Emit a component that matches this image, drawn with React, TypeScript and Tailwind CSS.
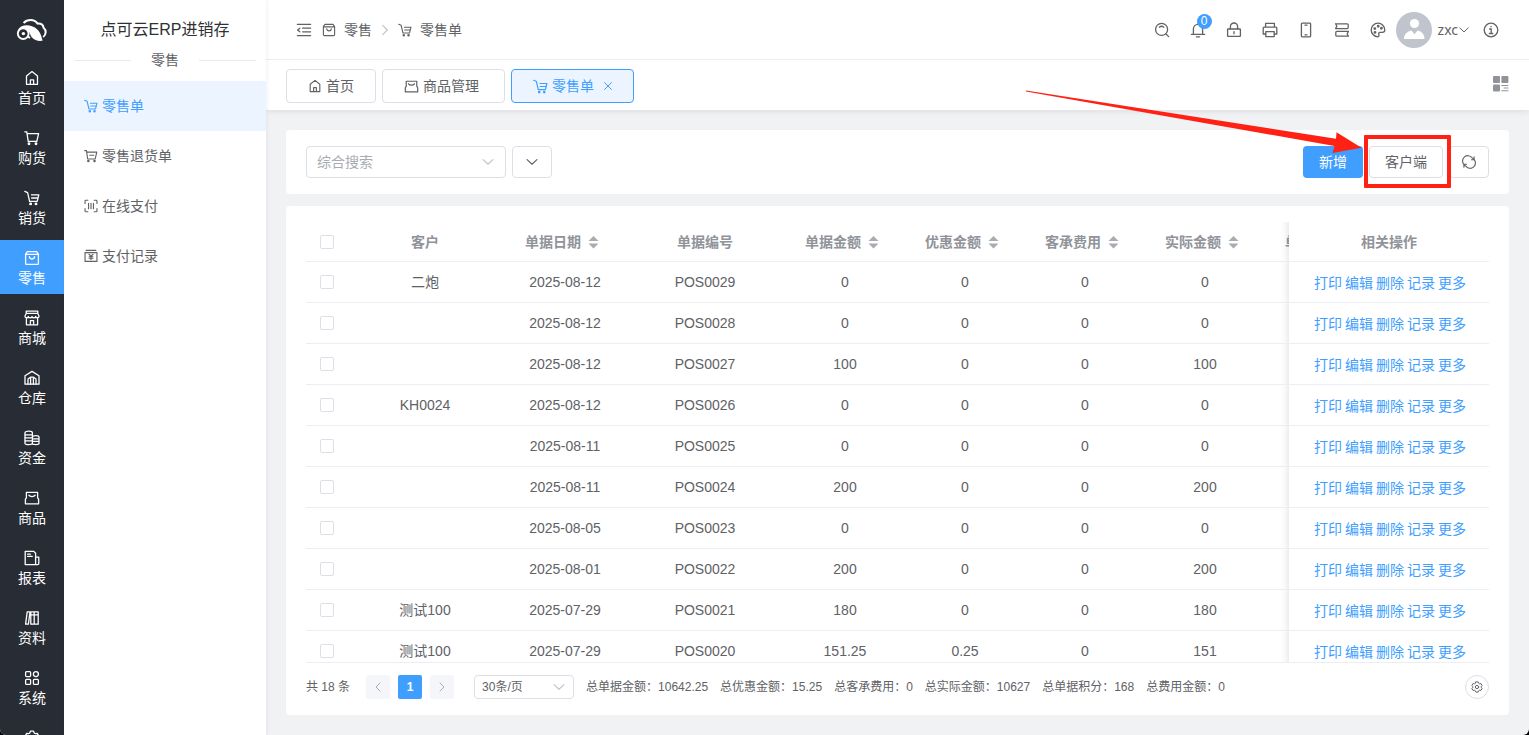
import type { ReactNode } from "react";

type IconProps = { className?: string };

function Svg({ className = "size-4", children }: { className?: string; children: ReactNode }) {
    return (
        <svg
            viewBox="0 0 16 16"
            className={`shrink-0 ${className}`}
            fill="none"
            stroke="currentColor"
            strokeWidth="1.3"
            strokeLinecap="round"
            strokeLinejoin="round"
            aria-hidden="true"
        >
            {children}
        </svg>
    );
}

const HomeIcon = ({ className }: IconProps) => (
    <Svg className={className}>
        <path d="M2.5 14.4V6L8 1.6 13.5 6v8.4z" />
        <path d="M6.4 14.2V9.8h3.2v4.400" />
    </Svg>
);

const CartIcon = ({ className }: IconProps) => (
    <Svg className={className}>
        <path d="M.8 1.8h2l1.400 9.600h8.600L14.6 3.6H3.2" />
        <circle cx="5" cy="13.8" r=".8" fill="currentColor" />
        <circle cx="12" cy="13.8" r=".8" fill="currentColor" />
    </Svg>
);

const CartReturnIcon = ({ className }: IconProps) => (
    <Svg className={className}>
        <path d="M.8 1.8h2l1.400 9.600h8.600L14.6 3.600H3.200M6.600 7.200h4.600" />
        <circle cx="5" cy="13.8" r=".8" fill="currentColor" />
        <circle cx="12" cy="13.8" r=".8" fill="currentColor" />
    </Svg>
);

const SaleCartIcon = ({ className }: IconProps) => (
    <Svg className={className}>
        <path d="M.8 1.400 3.600 2.600l2 8.800h7.600L14.800 4.800H7.400M7.600 8h6.200" />
        <circle cx="6.6" cy="13.900" r=".8" fill="currentColor" />
        <circle cx="12" cy="13.900" r=".8" fill="currentColor" />
    </Svg>
);

const BagIcon = ({ className }: IconProps) => (
    <Svg className={className}>
        <path d="M1.600 4.400h12.800v9a1 1 0 0 1-1 1H2.600a1 1 0 0 1-1-1zM1.600 4.200l1.800-2.600h9.200l1.800 2.600" />
        <path d="M5.400 6.600a2.600 2.400 0 0 0 5.200 0" />
    </Svg>
);

const ShopIcon = ({ className }: IconProps) => (
    <Svg className={className}>
        <path d="M2.200 1.200h11.600v2.200H2.200zM2.200 3.400.9 6.200c0 2 3.400 2 3.500.2 0 1.800 3.600 1.800 3.600 0 0 1.800 3.600 1.800 3.600 0 .1 1.800 3.500 1.800 3.500-.2l-1.300-2.800" />
        <path d="M2.400 8v6.800h11.200V8M6.400 14.600v-4h3.200v4" />
    </Svg>
);

const WarehouseIcon = ({ className }: IconProps) => (
    <Svg className={className}>
        <path d="M1 14.200V5.800l7-4.400 7 4.400v8.400z" />
        <path d="M4 14V9l2.400-1.800h3.200L12 9v5M6.600 14V7.400M9.400 14V7.400" />
    </Svg>
);

const CoinsIcon = ({ className }: IconProps) => (
    <Svg className={className}>
        <path d="M1 2.800C1 .6 8.400.6 8.400 2.800v10.800c0 1.400-7.400 1.400-7.400 0z" />
        <path d="M1.200 4.800h7M1.200 7.800h7M1.200 10.800h7" />
        <path d="M8.400 7.200c0-2 6.600-2 6.600 0v6.400c0 1.400-6.600 1.400-6.600 0M8.600 8.800h6.200M8.600 11.400h6.200" />
    </Svg>
);

const GoodsIcon = ({ className }: IconProps) => (
    <Svg className={className}>
        <path d="M2.400 2.400h11.200v5.400l1 1.400v4.600H1.400V9.200l1-1.400z" />
        <path d="M4.800 5.200c1.200 1.800 5.200 1.800 6.400 0" />
    </Svg>
);

const ReportIcon = ({ className }: IconProps) => (
    <Svg className={className}>
        <path d="M1.200 1.400h8.600l1.800 1.800v11.400H1.200zM11.800 7.200h3v6.400a1 1 0 0 1-1 1h-2" />
        <path d="M3.600 4.200h2.800M3.600 6.400h4.600" />
    </Svg>
);

const BooksIcon = ({ className }: IconProps) => (
    <Svg className={className}>
        <path d="M3.200 1.800h2.800L4.400 14.200H1.600zM6.800 1.800h3.400v12.400H6.800zM10.200 1.800h4v12.400h-4zM7 4.800h7" />
    </Svg>
);

const SystemIcon = ({ className }: IconProps) => (
    <Svg className={className}>
        <rect x="1.6" y="1.6" width="5" height="5" rx="1" />
        <circle cx="11.900" cy="4.100" r="2.500" />
        <rect x="1.6" y="9.4" width="5" height="5" rx="1" />
        <rect x="9.4" y="9.4" width="5" height="5" rx="1" />
    </Svg>
);

const GearIcon = ({ className }: IconProps) => (
    <Svg className={className}>
        <path d="M6.4 1.2h3.2l.6 1.800 1.200.7 1.900-.3 1.500 2.700-1.200 1.500v.8l1.200 1.500-1.500 2.700-1.900-.3-1.200.7-.6 1.800H6.400l-.6-1.800-1.200-.7-1.900.3-1.500-2.700 1.200-1.500v-.8L1.200 6.100l1.500-2.700 1.900.3 1.200-.7z" />
        <circle cx="8" cy="8" r="2.2" />
    </Svg>
);

const ScanIcon = ({ className }: IconProps) => (
    <Svg className={className}>
        <path d="M1.200 5V2.400a1 1 0 0 1 1-1h2.200M11.600 1.400h2.200a1 1 0 0 1 1 1V5M14.800 11v2.600a1 1 0 0 1-1 1h-2.200M4.400 14.600H2.200a1 1 0 0 1-1-1V11" />
        <path d="M5.200 4.800v6.400M8 4.800v6.400M10.800 4.800v6.400" />
    </Svg>
);

const PayLogIcon = ({ className }: IconProps) => (
    <Svg className={className}>
        <path d="M2.400 1.600h11.200M1.200 4.200h13.600v10H1.200z" />
        <path d="M5.800 6 8 8.400 10.200 6M5.800 8.800h4.400M5.800 10.600h4.400M8 8.400v3.800" />
    </Svg>
);

const FoldIcon = ({ className }: IconProps) => (
    <Svg className={className}>
        <path d="M1.400 2.400h13.200M6.600 6.200h8M6.600 9.800h8M1.400 13.600h13.200M3.800 6.200 1.600 8l2.200 1.800" />
    </Svg>
);

const SearchIcon = ({ className }: IconProps) => (
    <Svg className={className}>
        <circle cx="7.6" cy="7.400" r="6" />
        <path d="m12 12 2.600 2.600M5.400 5.200a3.400 3.400 0 0 1 4.400 0" />
    </Svg>
);

const BellIcon = ({ className }: IconProps) => (
    <Svg className={className}>
        <path d="M1.400 12.400h13.200M3.400 12.200V7a4.600 4.600 0 0 1 9.200 0v5.200M8 2.200v-1M6.400 14.800h3.200" />
    </Svg>
);

const LockIcon = ({ className }: IconProps) => (
    <Svg className={className}>
        <rect x="1.6" y="7" width="12.8" height="7.4" rx=".6" />
        <path d="M4.400 6.800V4.600a3.600 3.600 0 0 1 7.200 0v2.200M8 9.600v2.200" />
    </Svg>
);

const PrinterIcon = ({ className }: IconProps) => (
    <Svg className={className}>
        <path d="M3.600 5V1.400h8.800V5M3.600 12H1.200V6.200a1 1 0 0 1 1-1h11.600a1 1 0 0 1 1 1V12h-2.400" />
        <path d="M3.800 9.600h8.400v5H3.800z" />
    </Svg>
);

const PhoneIcon = ({ className }: IconProps) => (
    <Svg className={className}>
        <rect x="3.400" y="1.200" width="9.200" height="13.600" rx=".8" />
        <path d="M7 3.200h2M7 12.800h2" />
    </Svg>
);

const SizeIcon = ({ className }: IconProps) => (
    <Svg className={className}>
        <path d="M1.600 1.800h11.600a1 1 0 0 1 1 1v2.800a1 1 0 0 1-1 1H1.600M1.600 1.800l1.200 2.400-1.200 2.400M14.400 9.400H2.800a1 1 0 0 0-1 1v2.800a1 1 0 0 0 1 1h11.600M14.400 9.400l-1.200 2.400 1.200 2.400" />
    </Svg>
);

const PaletteIcon = ({ className }: IconProps) => (
    <Svg className={className}>
        <path d="M8 14.800A6.800 6.800 0 1 1 14.800 8c0 1.800-1.200 2.400-2.600 2.400H10c-1 0-1.600.8-1.200 1.800.4 1.200.2 2.600-.8 2.600z" />
        <circle cx="8.200" cy="4.200" r=".8" />
        <circle cx="11.400" cy="6.200" r=".8" />
        <circle cx="4.800" cy="6.600" r=".8" />
        <circle cx="5" cy="10.400" r=".8" />
    </Svg>
);

const InfoIcon = ({ className }: IconProps) => (
    <Svg className={className}>
        <circle cx="8" cy="8" r="6.8" />
        <path d="M6.600 7h1.600v4.400M6.400 11.500h3.400M8 4.400v.4" />
    </Svg>
);

const DownIcon = ({ className }: IconProps) => (
    <Svg className={className}>
        <path d="m2.400 5.200 5.600 5.400 5.600-5.400" />
    </Svg>
);

const LeftIcon = ({ className }: IconProps) => (
    <Svg className={className}>
        <path d="M10.600 2.600 5.400 8l5.200 5.400" />
    </Svg>
);

const RightIcon = ({ className }: IconProps) => (
    <Svg className={className}>
        <path d="M5.400 2.600 10.600 8l-5.200 5.400" />
    </Svg>
);

const CloseIcon = ({ className }: IconProps) => (
    <Svg className={className}>
        <path d="m1 1 14 14M15 1 1 15" strokeWidth="2" />
    </Svg>
);

const RefreshIcon = ({ className }: IconProps) => (
    <Svg className={className}>
        <path d="M2 10.600A6 6 0 0 1 11.400 3l2.200 2M13.800 2v3.400h-3M14 5.400A6 6 0 0 1 4.600 13l-2.200-2M2.200 14v-3.400h3" />
    </Svg>
);

const GridIcon = () => (
    <svg viewBox="0 0 16 16" className="mb-1 size-4" fill="currentColor" aria-hidden="true">
        <rect x="0" y="0" width="7" height="7" rx="1" />
        <rect x="8.4" y="0" width="7" height="7" rx="1" />
        <rect x="0" y="8.400" width="7" height="7" rx="1" />
        <path d="M8.400 9h7v1h-7zM10.800 11.600h4.600v1h-4.600zM8.400 14.200h7v1h-7z" />
    </svg>
);

const Logo = () => (
    <svg viewBox="0 0 32 24" className="h-6 w-8" fill="none" stroke="#fff" role="img" aria-label="点可云">
        <path d="M7.600 5C11 1.400 18 .6 21.600 5.600c3.400-.2 5.600 1.600 6 4.200 3 2.600 2.600 7-.4 9.200" strokeWidth="2" />
        <path
            d="M2 12C4.600 7 11 6.400 16.600 8.400c6.600 2.600 8.600 8 10 14.400-4.400.4-8.200-.2-10.600-3.200-2-2.600-2.200-6.400-5.600-8.400C7.600 9.800 4.600 10.400 2 12z"
            fill="#fff"
            stroke="none"
        />
        <path d="M12.600 15.600A5.400 5.400 0 1 1 7.200 10.200c3 0 5.400 2.400 5.400 5.400zM12 18.400l2 1.600" strokeWidth="1.900" />
        <circle cx="7.400" cy="15.600" r="1.700" fill="#fff" stroke="none" />
    </svg>
);

const modules = [
    { label: "首页", icon: HomeIcon },
    { label: "购货", icon: CartIcon },
    { label: "销货", icon: SaleCartIcon },
    { label: "零售", icon: BagIcon, active: true },
    { label: "商城", icon: ShopIcon },
    { label: "仓库", icon: WarehouseIcon },
    { label: "资金", icon: CoinsIcon },
    { label: "商品", icon: GoodsIcon },
    { label: "报表", icon: ReportIcon },
    { label: "资料", icon: BooksIcon },
    { label: "系统", icon: SystemIcon },
];

const menus = [
    { label: "零售单", icon: SaleCartIcon, active: true },
    { label: "零售退货单", icon: CartReturnIcon },
    { label: "在线支付", icon: ScanIcon },
    { label: "支付记录", icon: PayLogIcon },
];

const tools = [
    { label: "锁屏", icon: LockIcon },
    { label: "打印", icon: PrinterIcon },
    { label: "手机", icon: PhoneIcon },
    { label: "尺寸", icon: SizeIcon },
    { label: "主题", icon: PaletteIcon },
];

const columns = [
    { label: "客户", width: "w-40" },
    { label: "单据日期", width: "w-[120px]", sort: true },
    { label: "单据编号", width: "w-40" },
    { label: "单据金额", width: "w-[120px]", sort: true },
    { label: "优惠金额", width: "w-[120px]", sort: true },
    { label: "客承费用", width: "w-[120px]", sort: true },
    { label: "实际金额", width: "w-[120px]", sort: true },
    { label: "单据积分", width: "w-[120px]", sort: true },
];

const rows = [
    ["二炮", "2025-08-12", "POS0029", "0", "0", "0", "0", ""],
    ["", "2025-08-12", "POS0028", "0", "0", "0", "0", ""],
    ["", "2025-08-12", "POS0027", "100", "0", "0", "100", ""],
    ["KH0024", "2025-08-12", "POS0026", "0", "0", "0", "0", ""],
    ["", "2025-08-11", "POS0025", "0", "0", "0", "0", ""],
    ["", "2025-08-11", "POS0024", "200", "0", "0", "200", ""],
    ["", "2025-08-05", "POS0023", "0", "0", "0", "0", ""],
    ["", "2025-08-01", "POS0022", "200", "0", "0", "200", ""],
    ["测试100", "2025-07-29", "POS0021", "180", "0", "0", "180", ""],
    ["测试100", "2025-07-29", "POS0020", "151.25", "0.25", "0", "151", ""],
];

const actions = ["打印", "编辑", "删除", "记录", "更多"];

const totals = [
    "总单据金额：10642.25",
    "总优惠金额：15.25",
    "总客承费用：0",
    "总实际金额：10627",
    "总单据积分：168",
    "总费用金额：0",
];

function ModuleBar() {
    return (
        <nav className="flex w-16 shrink-0 flex-col overflow-hidden bg-[#282c34] text-white">
            <div className="flex h-[60px] shrink-0 items-center justify-center">
                <Logo />
            </div>
            {modules.map(({ label, icon: Icon, active }) => (
                <a
                    key={label}
                    href="#"
                    className={`mb-1.5 flex h-[54px] shrink-0 flex-col items-center justify-center gap-0.5 pt-1 text-sm/5 ${
                        active ? "bg-[#409eff]" : ""
                    }`}
                >
                    <Icon className="size-4" />
                    {label}
                </a>
            ))}
            <a href="#" aria-label="设置" className="flex h-[54px] shrink-0 justify-center pt-2.5">
                <GearIcon className="size-4" />
            </a>
        </nav>
    );
}

function SideMenu() {
    return (
        <aside className="z-10 flex w-[202px] shrink-0 flex-col bg-white shadow-[1px_0_4px_rgba(0,21,41,0.06)]">
            <h1 className="pt-[18px] text-center text-base/6 text-[#303133]">点可云ERP进销存</h1>
            <div className="mx-2.5 mt-2 mb-[11px] flex items-center gap-5 text-sm/5">
                <span className="h-px flex-1 bg-[#e8eaf2]" />
                零售
                <span className="h-px flex-1 bg-[#e8eaf2]" />
            </div>
            {menus.map(({ label, icon: Icon, active }) => (
                <a
                    key={label}
                    href="#"
                    className={`flex h-[50px] items-center gap-1 pl-5 text-sm ${
                        active ? "bg-[#ecf5ff] text-[#409eff]" : ""
                    }`}
                >
                    <Icon className="size-3.5" />
                    {label}
                </a>
            ))}
        </aside>
    );
}

function Header() {
    return (
        <header className="flex h-[60px] items-center justify-between border-b border-[#ebeef5] px-5 text-sm">
            <div className="flex items-center">
                <button aria-label="折叠菜单" className="flex w-9 justify-center">
                    <FoldIcon className="size-4" />
                </button>
                <a href="#" className="flex items-center gap-2">
                    <BagIcon className="size-3.5" />
                    零售
                </a>
                <RightIcon className="mx-1.5 size-3.5 text-[#c0c4cc]" />
                <a href="#" className="flex items-center gap-2">
                    <SaleCartIcon className="size-3.5" />
                    零售单
                </a>
            </div>
            <div className="flex items-center">
                <button aria-label="搜索" className="flex w-9 justify-center">
                    <SearchIcon />
                </button>
                <button aria-label="消息" className="relative flex w-9 justify-center">
                    <BellIcon />
                    <span className="absolute -top-2 right-1 flex size-[15px] items-center justify-center rounded-full bg-[#409eff] text-xs text-white">
                        0
                    </span>
                </button>
                {tools.map(({ label, icon: Icon }) => (
                    <button key={label} aria-label={label} className="flex w-9 justify-center">
                        <Icon />
                    </button>
                ))}
                <button className="flex items-center font-['Noto_Sans',sans-serif]">
                    <svg viewBox="0 0 36 36" className="mr-1.5 size-9" aria-hidden="true">
                        <circle cx="18" cy="18" r="18" fill="#c0c4cc" />
                        <circle cx="18.500" cy="11.500" r="4.600" fill="#fff" />
                        <path d="M8 27c0-4.500 3-7.400 7.400-8.400l3.100 3.600 3.100-3.600C26 19.600 28.500 22.500 28.500 27z" fill="#fff" />
                    </svg>
                    zxc
                    <DownIcon className="mr-[3px] size-3" />
                </button>
                <button aria-label="关于" className="flex w-9 justify-center">
                    <InfoIcon />
                </button>
            </div>
        </header>
    );
}

function Tabs() {
    return (
        <div className="flex h-[50px] items-center justify-between px-5 pt-0.5 text-sm">
            <div className="flex gap-1.5">
                <button className="flex h-[34px] items-center gap-1 rounded border border-[#dcdfe6] px-[21px]">
                    <HomeIcon className="size-3.5" />
                    首页
                </button>
                <button className="flex h-[34px] min-w-[123px] items-center gap-1 rounded border border-[#dcdfe6] px-[21px]">
                    <GoodsIcon className="size-[15px]" />
                    商品管理
                </button>
                <button className="flex h-[34px] items-center gap-1 rounded border border-[#409eff] bg-[#ecf5ff] px-[21px] text-[#409eff]">
                    <SaleCartIcon className="size-[15px]" />
                    零售单
                    <CloseIcon className="ml-1.5 size-2" />
                </button>
            </div>
            <button aria-label="标签操作" className="text-[#909399]">
                <GridIcon />
            </button>
        </div>
    );
}

function Toolbar() {
    return (
        <section className="flex items-center justify-between rounded bg-white px-5 py-4 text-sm">
            <div className="flex gap-1.5">
                <div className="relative">
                    <input
                        aria-label="综合搜索"
                        placeholder="综合搜索"
                        className="h-8 w-[200px] rounded border border-[#dcdfe6] px-2.5 outline-none placeholder:text-[#a8abb2]"
                    />
                    <DownIcon className="absolute top-[9px] right-[11px] size-3.5 text-[#c0c4cc]" />
                </div>
                <button aria-label="展开" className="flex h-8 w-10 items-center justify-center rounded border border-[#dcdfe6]">
                    <DownIcon className="size-3.5" />
                </button>
            </div>
            <div className="flex gap-1.5">
                <button className="h-8 rounded bg-[#409eff] px-4 text-white">新增</button>
                <div className="relative">
                    <button className="h-8 rounded border border-[#dcdfe6] px-[15px]">客户端</button>
                    {/* red callout around the client button */}
                    <div className="pointer-events-none absolute -top-[11px] -right-2 -bottom-2.5 -left-[5px] z-20 rounded-[1px] border-4 border-[#ff2113]" />
                    <svg
                        viewBox="0 0 336 64"
                        className="pointer-events-none absolute -top-14 right-full z-20 mr-[7px] h-16 w-[336px] max-w-none"
                        aria-hidden="true"
                    >
                        <path d="M0 .5 310 48.700 310.500 42.300 335.500 57.700 306.500 63 308.500 56 0 1.500z" fill="#ff2113" />
                    </svg>
                </div>
                <button aria-label="刷新" className="flex h-8 w-10 items-center justify-center rounded border border-[#dcdfe6]">
                    <RefreshIcon className="size-3.5" />
                </button>
            </div>
        </section>
    );
}

const SortIcon = () => (
    <svg viewBox="0 0 24 14" className="h-3.5 w-6 shrink-0" fill="#a8abb2" aria-hidden="true">
        <path d="m7.500 6 5-5 5 5zM7.500 8.500l5 5 5-5z" />
    </svg>
);

function CheckBox({ label }: { label: string }) {
    return (
        <input
            type="checkbox"
            aria-label={label}
            className="ml-3.5 block size-3.5 appearance-none rounded-[2px] border border-[#dcdfe6] bg-white checked:bg-[#409eff]"
        />
    );
}

const fixedCell =
    "sticky right-0 border-b border-[#ebeef5] bg-white before:absolute before:inset-y-0 before:-left-2.5 before:w-2.5 before:shadow-[inset_-10px_0_10px_-10px_rgba(0,0,0,0.15)]";

function OrderTable() {
    return (
        <div className="min-h-0 flex-1 overflow-hidden border-b border-[#ebeef5]">
            <table className="w-full min-w-[1279px] table-fixed border-separate border-spacing-0 text-center text-sm/5">
                <thead className="text-[#909399]">
                    <tr className="h-10">
                        <th className="w-[39px] border-b border-[#ebeef5]">
                            <CheckBox label="全选" />
                        </th>
                        {columns.map((col) => (
                            <th key={col.label} className={`border-b border-[#ebeef5] ${col.width}`}>
                                <div className="flex items-center justify-center">
                                    {col.label}
                                    {col.sort && <SortIcon />}
                                </div>
                            </th>
                        ))}
                        <th className={`w-[200px] ${fixedCell}`}>相关操作</th>
                    </tr>
                </thead>
                <tbody>
                    {rows.map((row) => (
                        <tr key={row[2]} className="h-[41px]">
                            <td className="border-b border-[#ebeef5]">
                                <CheckBox label={row[2]} />
                            </td>
                            {row.map((cell, i) => (
                                <td key={i} className="border-b border-[#ebeef5]">
                                    {cell}
                                </td>
                            ))}
                            <td className={fixedCell}>
                                <div className="flex justify-center gap-[3px] pt-0.5 pl-0.5 text-[#409eff]">
                                    {actions.map((action) => (
                                        <a key={action} href="#">
                                            {action}
                                        </a>
                                    ))}
                                </div>
                            </td>
                        </tr>
                    ))}
                </tbody>
            </table>
        </div>
    );
}

function TableFooter() {
    return (
        <div className="mt-3 flex h-6 shrink-0 items-center text-xs">
            <span className="mr-4">共 18 条</span>
            <div className="mr-5 flex gap-2">
                <button aria-label="上一页" className="flex size-6 items-center justify-center rounded-[2px] bg-[#f5f6fa] text-[#a8abb2]">
                    <LeftIcon className="size-3" />
                </button>
                <button className="size-6 rounded-[2px] bg-[#409eff] font-bold text-white">1</button>
                <button aria-label="下一页" className="flex size-6 items-center justify-center rounded-[2px] bg-[#f5f6fa] text-[#a8abb2]">
                    <RightIcon className="size-3" />
                </button>
            </div>
            <div className="relative mr-3">
                <select
                    aria-label="每页条数"
                    className="block h-6 w-[100px] appearance-none rounded border border-[#dcdfe6] bg-white px-[7px] outline-none"
                >
                    <option>30条/页</option>
                    <option>60条/页</option>
                </select>
                <DownIcon className="pointer-events-none absolute top-[5px] right-2 size-3.5 text-[#c0c4cc]" />
            </div>
            <div className="flex flex-1 gap-3 whitespace-nowrap">
                {totals.map((item) => (
                    <span key={item}>{item}</span>
                ))}
            </div>
            <button aria-label="列设置" className="flex size-6 items-center justify-center rounded-full border border-[#dcdfe6]">
                <GearIcon className="size-3" />
            </button>
        </div>
    );
}

export default function App() {
    return (
        <div className="h-screen bg-black font-['Liberation_Sans','Noto_Sans_CJK_SC',sans-serif] text-[#606266]">
            <div className="flex h-full overflow-hidden rounded-b-md bg-[#f1f2f4]">
                <ModuleBar />
                <SideMenu />
                <div className="flex min-w-0 flex-1 flex-col">
                    <div className="bg-white shadow-[0_1px_6px_rgba(0,21,41,0.1)]">
                        <Header />
                        <Tabs />
                    </div>
                    <main className="flex min-h-0 flex-1 flex-col gap-3 p-5">
                        <Toolbar />
                        <section className="flex min-h-0 flex-1 flex-col rounded bg-white px-5 py-4">
                            <OrderTable />
                            <TableFooter />
                        </section>
                    </main>
                </div>
            </div>
        </div>
    );
}
